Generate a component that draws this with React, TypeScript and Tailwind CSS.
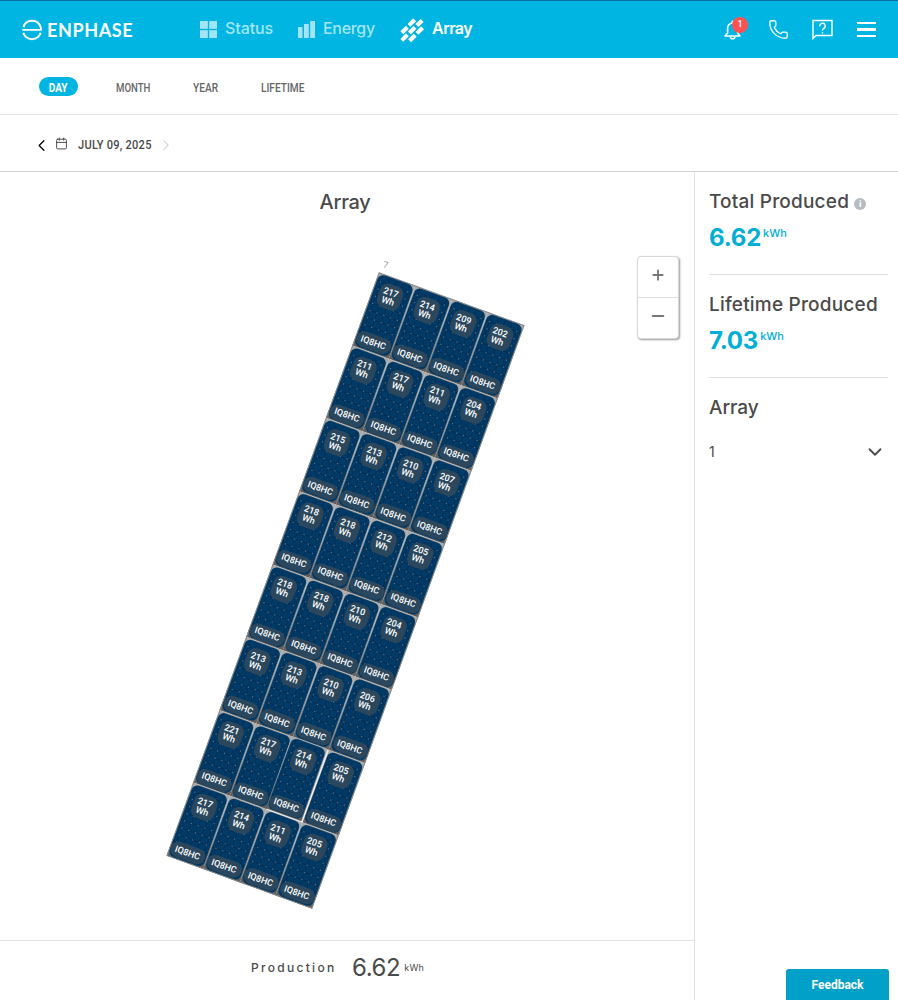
import { Calendar, ChevronDown, ChevronLeft, ChevronRight, Minus, Phone, Plus } from "lucide-react";

interface Stat {
    title: string;
    value: string;
    info?: boolean;
}

const panels: number[][] = [
    [217, 214, 209, 202],
    [211, 217, 211, 204],
    [215, 213, 210, 207],
    [218, 218, 212, 205],
    [218, 218, 210, 204],
    [213, 213, 210, 206],
    [221, 217, 214, 205],
    [217, 214, 211, 205],
];

const stats: Stat[] = [
    { title: "Total Produced", value: "6.62", info: true },
    { title: "Lifetime Produced", value: "7.03" },
];

function Logo() {
    return (
        <div className="flex w-[110px] items-center gap-[5px] text-white">
            <svg width="20" height="22" viewBox="0 0 20 22" fill="none" stroke="currentColor" strokeWidth="2" className="shrink-0">
                <path d="M1.4 8.2 A9 9 0 0 1 18.6 8.2" />
                <path d="M0.3 10.9 H18.9 V8" strokeWidth="1.8" />
                <path d="M1.4 13.8 A9 9 0 0 0 18.6 13.8" />
            </svg>
            <span className="origin-left scale-x-[0.95] font-['Lato',sans-serif] text-[19px] leading-[22px] font-bold tracking-[0.6px]">
                ENPHASE
            </span>
        </div>
    );
}

function StatusIcon() {
    return (
        <svg width="17" height="17" viewBox="0 0 17 17" fill="currentColor">
            <rect width="7.8" height="7.8" />
            <rect x="9.2" width="7.8" height="7.8" />
            <rect y="9.2" width="7.8" height="7.8" />
            <rect x="9.2" y="9.2" width="7.8" height="7.8" />
        </svg>
    );
}

function EnergyIcon() {
    return (
        <svg width="17" height="17" viewBox="0 0 17 17" fill="currentColor">
            <rect y="6" width="4.5" height="11" />
            <rect x="6" y="3" width="4.8" height="14" />
            <rect x="12.2" width="4.8" height="17" />
        </svg>
    );
}

function ArrayIcon() {
    return (
        <svg width="24" height="24" viewBox="0 0 24 24" stroke="currentColor" strokeWidth="4.1" fill="none">
            <path d="M9 7.4 L14.6 1.8" />
            <path d="M16.8 7.6 L22.2 2.4" />
            <path d="M1.8 14.8 L7.4 9.2" />
            <path d="M9.4 15 L15 9.4" />
            <path d="M17 15.4 L22.6 9.8" />
            <path d="M1.8 22.4 L7.4 16.8" />
            <path d="M9.6 22.8 L15.2 17.2" />
        </svg>
    );
}

function BellIcon() {
    return (
        <svg width="18" height="20" viewBox="0 0 18 20" fill="none" stroke="currentColor" strokeWidth="1.6">
            <path d="M1 16 H16 L13.6 13 V8 A5 5 0 0 0 3.6 8 V13 Z" strokeLinejoin="round" />
            <path d="M8.6 3 V0.6" strokeWidth="2" />
            <path d="M6.3 16.8 A2.3 2 0 0 0 10.9 16.8" />
        </svg>
    );
}

function Header() {
    return (
        <header className="flex h-[58px] items-center border-t border-[#086f9f] bg-[#00b5e2] pl-[22px]">
            <Logo />

            <nav className="ml-[68px] flex h-full items-center font-['Inter',sans-serif] text-base font-medium text-[#a3e5f5]">
                <div className="flex w-[98px] items-center gap-2">
                    <StatusIcon />
                    <span className="-mt-1 tracking-[-0.1px]">Status</span>
                </div>
                <div className="flex w-[102px] items-center gap-2">
                    <EnergyIcon />
                    <span className="-mt-1 tracking-[-0.3px]">Energy</span>
                </div>
                <div className="flex items-center gap-2 text-white">
                    <ArrayIcon />
                    <span className="-mt-1 font-semibold tracking-[-0.5px]">Array</span>
                </div>
            </nav>

            <div className="mr-[22px] ml-auto flex items-center text-white">
                <div className="relative mr-[26px]">
                    <BellIcon />
                    <span className="absolute -top-[3px] left-2 flex size-4 items-center justify-center rounded-full bg-[#ff5252] font-['Roboto',sans-serif] text-[9px] font-medium">
                        1
                    </span>
                </div>
                <Phone size={21} strokeWidth={1.5} className="mr-[23px]" />
                <svg width="21" height="21" viewBox="0 0 21 21" fill="none" stroke="currentColor" strokeWidth="1.4" className="mr-[24px]">
                    <path d="M1 19.5 V1.5 H20 V16.5 H4 Z" />
                    <path d="M7.8 7.2 A2.7 2.7 0 1 1 11.6 9.5 Q10.5 10.2 10.5 11.5 M10.5 13 V14.4" />
                </svg>
                <div className="flex w-[19px] flex-col gap-1">
                    <span className="h-[2.5px] bg-white" />
                    <span className="h-[2.5px] bg-white" />
                    <span className="h-[2.5px] bg-white" />
                </div>
            </div>
        </header>
    );
}

function Panel({ watts, raised }: { watts: number; raised: boolean }) {
    return (
        <div
            className={`h-full w-full bg-linear-to-b from-[#a9abad] via-[#7f8a93] to-[#5e5c5b] p-px ${
                raised ? "-translate-x-px -translate-y-[0.5px] shadow-[1.5px_1px_0_#f2f0ee]" : ""
            }`}
        >
            <div className="relative h-full w-full overflow-hidden rounded-[6px] bg-[#003a66]">
                <svg className="absolute inset-0" width="37" height="76" viewBox="0 0 37 76" stroke="#022c50" strokeWidth="0.7">
                    {[7.6, 15.2, 22.8, 30.4, 38, 45.6, 53.2, 60.8, 68.4].map((y) => (
                        <path key={y} d={`M0 ${y} H37`} />
                    ))}
                    {[4, 11.2, 18.4, 25.6, 32.8].map((x) => (
                        <g key={x}>
                            <path d={`M${x} 0 V76`} />
                            <path d={`M${x} 0 V76`} stroke="#54718a" strokeWidth="1.3" strokeDasharray="1.3 6.3" strokeDashoffset="0.65" />
                        </g>
                    ))}
                </svg>
                <div className="relative mx-auto mt-[6px] flex h-[25px] w-[24px] items-center justify-center rounded-[8px] bg-[#2b475d] text-center text-[9px] leading-[9px] font-medium text-white">
                    <p className="-ml-[2px]">
                        {watts}
                        <br />
                        Wh
                    </p>
                </div>
                <div className="relative mx-auto mt-[28px] flex h-[16px] w-[36px] items-center justify-center rounded-[8px] bg-[#2b475d] text-[9px] leading-none font-medium text-white">
                    <span className="-ml-px">IQ8HC</span>
                </div>
            </div>
        </div>
    );
}

function ZoomControls() {
    return (
        <div className="absolute top-[84px] left-[637px] flex h-[83px] w-[42px] flex-col rounded border border-[#d8d8d8] bg-white text-[#777] shadow-[1px_1px_2px_#999]">
            <button className="flex h-[41px] items-center justify-center border-b border-[#ddd] pb-1">
                <Plus size={16} strokeWidth={2.8} />
            </button>
            <button className="flex flex-1 items-center justify-center pb-1">
                <Minus size={18} strokeWidth={2.8} />
            </button>
        </div>
    );
}

export default function App() {
    return (
        <div className="flex h-[1000px] w-[898px] flex-col overflow-hidden bg-white font-['Inter',sans-serif] text-[#4a4a4a]">
            <Header />

            <div className="flex h-[57px] items-center border-b border-[#e4e4e4] pl-[39px] font-['Roboto',sans-serif] text-[13px] font-medium text-[#666]">
                <div className="mr-[38px] flex h-[19px] w-[39px] items-center justify-center rounded-full bg-[#00b5e2] pt-[3px] font-bold text-white">
                    <span className="scale-x-[0.78]">DAY</span>
                </div>
                <div className="flex pt-[3px]">
                    <span className="w-[77px] origin-left scale-x-[0.74]">MONTH</span>
                    <span className="w-[68px] origin-left scale-x-[0.78]">YEAR</span>
                    <span className="origin-left scale-x-[0.78]">LIFETIME</span>
                </div>
            </div>

            <div className="flex h-[57px] items-center border-b border-[#d2d2d2] pt-1 pl-[32px] font-['Roboto',sans-serif] text-[13px] font-medium">
                <ChevronLeft size={19} strokeWidth={1.6} className="text-black" />
                <Calendar size={13} strokeWidth={1.8} className="-mt-1 mr-[10px] ml-[4px]" />
                <span className="w-[80px] origin-left scale-x-[0.85] tracking-[0.3px] whitespace-nowrap">JULY 09, 2025</span>
                <ChevronRight size={18} strokeWidth={1.4} className="-ml-px text-[#ccc]" />
            </div>

            <div className="flex min-h-0 flex-1">
                <main className="flex w-[695px] flex-col border-r border-[#e2e2e2]">
                    <div className="relative flex-1">
                        <h1 className="pt-4 pr-1 text-center text-xl leading-[28px] font-medium tracking-[-0.3px]">Array</h1>

                        <span className="absolute top-[87px] left-[383px] rotate-[10deg] font-['Roboto',sans-serif] text-[9px] text-[#999]">
                            7
                        </span>

                        <div className="absolute top-[108px] left-[268px] grid h-[621px] w-[155px] rotate-20 grid-cols-4 grid-rows-8 font-['Roboto',sans-serif] outline outline-[#8b8987] -outline-offset-1">
                            {panels.map((row, r) =>
                                row.map((watts, c) => (
                                    <Panel key={`${r}-${c}`} watts={watts} raised={r === 6 && c === 2} />
                                ))
                            )}
                        </div>

                        <ZoomControls />
                    </div>

                    <footer className="flex h-[60px] items-center border-t border-[#e2e2e2] pb-[5px] pl-[251px]">
                        <span className="w-[101px] text-xs font-medium tracking-[2.3px]">Production</span>
                        <span className="text-2xl tracking-[-0.4px]">6.62</span>
                        <span className="ml-1 text-[9px] tracking-[0.2px]">kWh</span>
                    </footer>
                </main>

                <aside className="relative flex-1 pr-[10px] pl-[14px]">
                    {stats.map((stat) => (
                        <section key={stat.title} className="h-[103px] border-b border-[#dedede] pt-4">
                            <div className="flex items-center gap-[5px]">
                                <h2 className="text-[19px] leading-[28px] font-medium tracking-[0.2px] whitespace-nowrap">{stat.title}</h2>
                                {stat.info && (
                                    <span className="mt-1 flex size-3 shrink-0 items-center justify-center rounded-full bg-[#b7bcc2] text-[9px] font-bold text-white">
                                        i
                                    </span>
                                )}
                            </div>
                            <div className="mt-[6px] flex text-[#00aed6]">
                                <span className="text-2xl leading-[32px] font-bold tracking-[-0.2px]">{stat.value}</span>
                                <span className="ml-0.5 pt-[3px] text-[11px] leading-4 font-medium">kWh</span>
                            </div>
                        </section>
                    ))}

                    <h2 className="pt-4 text-[19px] leading-[28px] font-medium">Array</h2>
                    <div className="mt-[19px] flex items-center justify-between pr-[2px] text-sm">
                        <span>1</span>
                        <ChevronDown size={22} strokeWidth={2} />
                    </div>

                    <button className="absolute right-[9px] bottom-0 h-[31px] w-[103px] rounded-t-[3px] bg-[#00a0c8] font-['Roboto',sans-serif] text-xs font-bold text-white">
                        Feedback
                    </button>
                </aside>
            </div>
        </div>
    );
}
